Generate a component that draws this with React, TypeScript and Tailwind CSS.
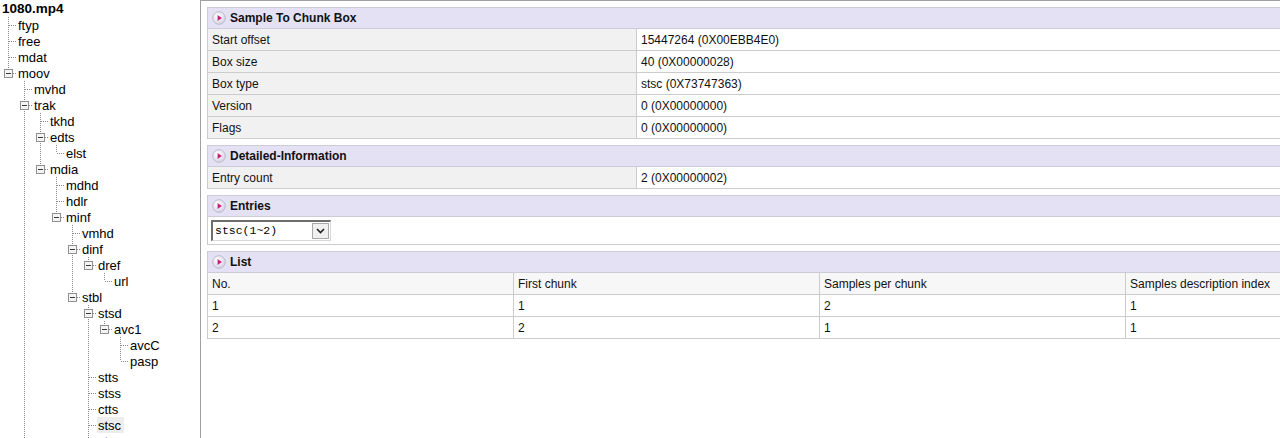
import React from "react";

type Node = { name: string; children?: Node[]; selected?: boolean };

const tree: Node = {
  name: "1080.mp4",
  children: [
    { name: "ftyp" },
    { name: "free" },
    { name: "mdat" },
    {
      name: "moov",
      children: [
        { name: "mvhd" },
        {
          name: "trak",
          children: [
            { name: "tkhd" },
            { name: "edts", children: [{ name: "elst" }] },
            {
              name: "mdia",
              children: [
                { name: "mdhd" },
                { name: "hdlr" },
                {
                  name: "minf",
                  children: [
                    { name: "vmhd" },
                    { name: "dinf", children: [{ name: "dref", children: [{ name: "url" }] }] },
                    {
                      name: "stbl",
                      children: [
                        {
                          name: "stsd",
                          children: [{ name: "avc1", children: [{ name: "avcC" }, { name: "pasp" }] }],
                        },
                        { name: "stts" },
                        { name: "stss" },
                        { name: "ctts" },
                        { name: "stsc", selected: true },
                        { name: "stsz" },
                        { name: "stco" },
                      ],
                    },
                  ],
                },
              ],
            },
          ],
        },
        { name: "trak", children: [{ name: "tkhd" }] },
        { name: "udta" },
      ],
    },
  ],
};

type Row = { node: Node; guides: boolean[]; last: boolean; depth: number };

function flatten(n: Node, guides: boolean[], last: boolean, depth: number, out: Row[]) {
  out.push({ node: n, guides, last, depth });
  const kids = n.children || [];
  kids.forEach((k, i) => {
    const childGuides = depth === 0 ? [] : [...guides, !last];
    flatten(k, childGuides, i === kids.length - 1, depth + 1, out);
  });
}

const allRows: Row[] = [];
flatten(tree, [], true, 0, allRows);
const rows = allRows.slice(0, 28);

const DOT = "#8a8a8a";

function Guide({ on }: { on: boolean }) {
  return (
    <svg width="16" height="16" className="shrink-0 block">
      {on && <line x1="8.5" y1="0" x2="8.5" y2="16" stroke={DOT} strokeDasharray="1 1" />}
    </svg>
  );
}

function Connector({ last, hasKids }: { last: boolean; hasKids: boolean }) {
  return (
    <svg width="16" height="16" className="shrink-0 block">
      <line x1="8.5" y1="0" x2="8.5" y2={last ? 8 : 16} stroke={DOT} strokeDasharray="1 1" />
      <line x1="9" y1="8.5" x2="16" y2="8.5" stroke={DOT} strokeDasharray="1 1" />
      {hasKids && (
        <g>
          <rect x="4.5" y="4.5" width="8" height="8" fill="#f4f4f4" stroke="#8f8f8f" />
          <line x1="6" y1="8.5" x2="11" y2="8.5" stroke="#3a3a3a" />
        </g>
      )}
    </svg>
  );
}

function Tree() {
  return (
    <div className="w-[200px] shrink-0 h-full overflow-hidden bg-white pt-[1px]">
      {rows.map((r, i) => {
        if (r.depth === 0) {
          return (
            <div key={i} className="h-4 flex items-center pl-[2px] font-bold text-[13.5px] text-black leading-none">
              {r.node.name}
            </div>
          );
        }
        return (
          <div key={i} className="h-4 flex items-center">
            {r.guides.map((g, j) => (
              <Guide key={j} on={g} />
            ))}
            <Connector last={r.last} hasKids={!!r.node.children} />
            <span
              className={
                "ml-[1px] px-[1px] h-4 flex items-center text-[13px] leading-none text-black " +
                (r.node.selected ? "bg-[#ededed] pr-[3px]" : "")
              }
            >
              {r.node.name}
            </span>
          </div>
        );
      })}
    </div>
  );
}

function SectionIcon() {
  return (
    <svg width="14" height="14" viewBox="0 0 14 14" className="shrink-0">
      <defs>
        <radialGradient id="ig" cx="40%" cy="35%" r="70%">
          <stop offset="0%" stopColor="#ffffff" />
          <stop offset="100%" stopColor="#d4d0e2" />
        </radialGradient>
      </defs>
      <circle cx="7" cy="7" r="6.3" fill="url(#ig)" stroke="#b4b0c4" strokeWidth="0.8" />
      <path d="M5.6 4 L9.8 7 L5.6 10 Z" fill="#d0187a" />
    </svg>
  );
}

function Header({ title }: { title: string }) {
  return (
    <div className="h-[22px] bg-[#e4e1f4] border border-[#cdcbd6] flex items-center gap-[4px] pl-[4px] font-bold text-[12px] text-[#111]">
      <SectionIcon />
      <span>{title}</span>
    </div>
  );
}

function KV({ rows: kv }: { rows: [string, string][] }) {
  return (
    <div className="border-x border-[#cccccc]">
      {kv.map(([k, v], i) => (
        <div key={i} className="flex h-[22px] border-b border-[#cccccc]">
          <div className="w-[429px] shrink-0 bg-[#f2f1f1] border-r border-[#cccccc] pl-[4px] flex items-center text-[12px] text-[#111]">
            {k}
          </div>
          <div className="flex-1 bg-white pl-[4px] flex items-center text-[12px] text-[#111]">{v}</div>
        </div>
      ))}
    </div>
  );
}

function Panel() {
  const cells = [
    ["No.", "First chunk", "Samples per chunk", "Samples description index"],
    ["1", "1", "2", "1"],
    ["2", "2", "1", "1"],
  ];
  return (
    <div className="flex-1 h-full overflow-hidden border-l border-t border-[#a0a0a0] bg-white pl-[6px] pt-[6px]">
      <div className="w-[1430px] flex flex-col gap-[6px] font-['Liberation_Sans',Arial,sans-serif]">
        <div>
          <Header title="Sample To Chunk Box" />
          <KV
            rows={[
              ["Start offset", "15447264 (0X00EBB4E0)"],
              ["Box size", "40 (0X00000028)"],
              ["Box type", "stsc (0X73747363)"],
              ["Version", "0 (0X00000000)"],
              ["Flags", "0 (0X00000000)"],
            ]}
          />
        </div>
        <div>
          <Header title="Detailed-Information" />
          <KV rows={[["Entry count", "2 (0X00000002)"]]} />
        </div>
        <div>
          <Header title="Entries" />
          <div className="h-[28px] border-x border-b border-[#cccccc] bg-white flex items-center pl-[3px]">
            <div className="w-[120px] h-[21px] flex border-t-2 border-l-2 border-b border-r border-t-[#6e6e6e] border-l-[#6e6e6e] border-b-[#d8d8d8] border-r-[#d8d8d8] bg-white">
              <div className="flex-1 flex items-center pl-[2px] font-['Liberation_Mono',monospace] text-[11.5px] text-black">
                stsc(1~2)
              </div>
              <div className="w-[17px] my-[1px] mr-[1px] bg-[#f0f0f0] border border-[#a9a9a9] flex items-center justify-center">
                <svg width="9" height="6" viewBox="0 0 9 6">
                  <path d="M1 1 L4.5 4.5 L8 1" fill="none" stroke="#222" strokeWidth="1.6" />
                </svg>
              </div>
            </div>
          </div>
        </div>
        <div>
          <Header title="List" />
          <div className="border-x border-[#cccccc]">
            {cells.map((r, i) => (
              <div key={i} className="flex h-[22px] border-b border-[#cccccc]">
                {r.map((c, j) => (
                  <div
                    key={j}
                    className={
                      "flex items-center pl-[4px] text-[12px] text-[#111] " +
                      (j < 3 ? "w-[306px] shrink-0 border-r border-[#cccccc] " : "flex-1 ") +
                      (i === 0 ? "bg-[#f7f7f7]" : "bg-white")
                    }
                  >
                    {c}
                  </div>
                ))}
              </div>
            ))}
          </div>
        </div>
      </div>
    </div>
  );
}

export default function App() {
  return (
    <div className="w-[1280px] h-[438px] overflow-hidden flex bg-white font-['Liberation_Sans',Arial,sans-serif]">
      <Tree />
      <Panel />
    </div>
  );
}
